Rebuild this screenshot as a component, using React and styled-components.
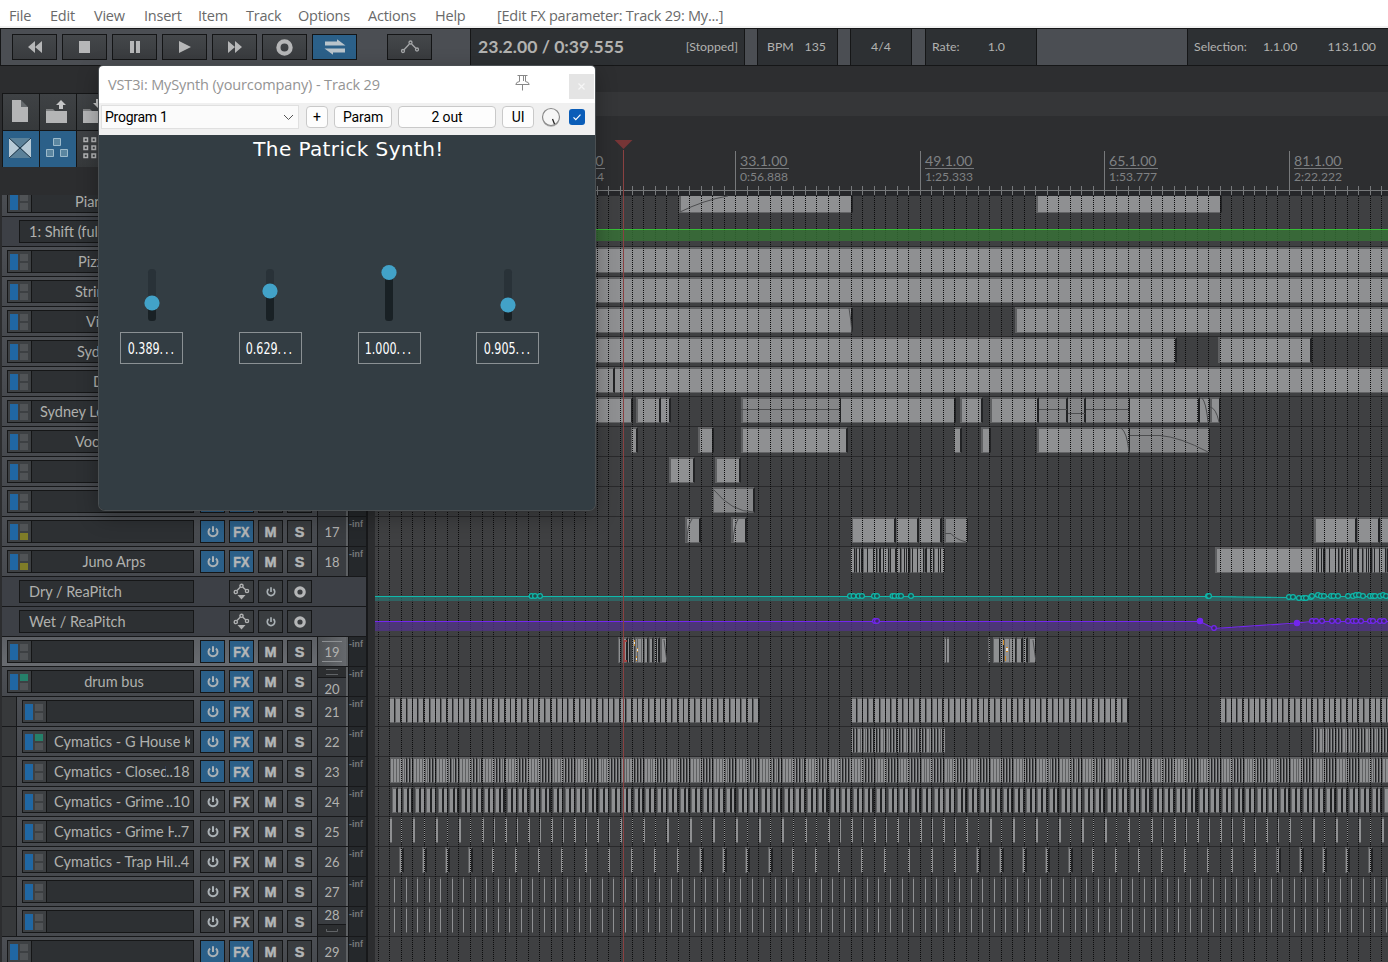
import React from "react";
import styled, { createGlobalStyle } from "styled-components";

const Global = createGlobalStyle`
  * { box-sizing: border-box; }
  html, body { margin: 0; padding: 0; }
  body { width: 1388px; height: 962px; overflow: hidden; background: #2c2d2f; }
`;

const ui = `"Open Sans", "Noto Sans", sans-serif`;
const theme = `Lato, "Liberation Sans", sans-serif`;

const Page = styled.div`
  position: relative;
  width: 1388px;
  height: 962px;
  overflow: hidden;
  display: flex;
  flex-direction: column;
  background: #2c2d2f;
  font-family: ${theme};
  color: #b2b2b0;
`;

/* ---------- menu ---------- */
const MenuBar = styled.div`
  height: 28px;
  flex: none;
  display: flex;
  background: #fff;
  border-bottom: 2px solid #f0f0f0;
  padding-left: 9px;
`;
const MenuItem = styled.div`
  width: ${(p) => p.$w}px;
  height: 26px;
  white-space: nowrap;
  font: 14.5px/31px ${ui};
  letter-spacing: -0.22px;
  color: #6a6a6a;
`;

/* ---------- transport ---------- */
const Transport = styled.div`
  height: 38px;
  flex: none;
  display: flex;
  background: #4b4e53;
  border-top: 1px solid #151617;
  border-bottom: 1px solid #151617;
  border-left: 1px solid #151617;
`;
const TransportButtons = styled.div`
  width: 469px;
  flex: none;
  padding: 5px 0 0 11px;
  display: flex;
  gap: 5px;
`;
const TButton = styled.div`
  width: 45px;
  height: 26px;
  display: flex;
  align-items: center;
  justify-content: center;
  border: 1px solid #141516;
  background: ${(p) => (p.$on ? "#2b6089" : "linear-gradient(#44474a, #393b3e)")};
  margin-left: ${(p) => p.$ml || 0}px;
`;
const Readout = styled.div`
  width: ${(p) => p.$w}px;
  flex: none;
  display: flex;
  justify-content: ${(p) => p.$j || "space-between"};
  padding: ${(p) => p.$p};
  margin-left: ${(p) => p.$ml || 0}px;
  background: #2d3033;
  border-left: 1px solid #151617;
  border-right: 1px solid #151617;
  font-size: 12.3px;
  line-height: 36px;
  white-space: pre;
`;
const BigTime = styled.span`
  font-size: 17.6px;
  font-weight: 700;
  line-height: 36px;
`;
const RangeEnd = styled.span`
  margin-left: 14px;
`;

/* ---------- main ---------- */
const Main = styled.div`
  flex: 1;
  min-height: 0;
  display: flex;
`;
const LeftPane = styled.div`
  width: 375px;
  flex: none;
  display: flex;
  flex-direction: column;
  overflow: hidden;
`;
const ToolGrid = styled.div`
  height: 129px;
  flex: none;
  padding: 27px 0 0 2px;
  display: grid;
  grid-template-columns: repeat(3, 37px);
  grid-auto-rows: 37px;
`;
const Tool = styled.div`
  border: 1px solid #151617;
  border-width: 1px 0 0 1px;
  display: flex;
  align-items: center;
  justify-content: center;
  padding: 0 2px 2px 0;
  background: ${(p) => (p.$on ? "#2b6089" : "linear-gradient(#3f4245, #36393b)")};
`;
const TrackPanel = styled.div`
  flex: 1;
  min-height: 0;
  width: 368px;
  margin-left: 2px;
  overflow: hidden;
  display: flex;
  flex-direction: column;
  justify-content: flex-end;
  margin-bottom: -5px;
`;

const Row = styled.div`
  height: 30px;
  flex: none;
  display: flex;
  width: 366px;
  border-bottom: 1px solid #17181a;
  border-right: 2px solid #17181a;
  background: ${(p) =>
    p.$kind === "env" ? "#3d4046" : p.$kind === "sel" ? "linear-gradient(#5d6065,#686b70)" : "linear-gradient(#4c4f54,#46494e)"};
`;
const Indent = styled.div`
  width: 15px;
  flex: none;
  background: #37393b;
  border-right: 1px solid #17181a;
`;
const Body = styled.div`
  flex: 1;
  display: flex;
  padding: 3px 0 0 ${(p) => (p.$env ? 17 : 5)}px;
`;
const IconBox = styled.div`
  width: 25px;
  height: 23px;
  flex: none;
  display: grid;
  grid-template-columns: 8px 8px;
  grid-template-rows: 6px 6px;
  gap: 3px 2px;
  padding: 3px 0 0 2px;
  border: 1px solid #151617;
  background: #3d4043;
`;
const Chip = styled.i`
  background: ${(p) => p.$c};
  grid-row: ${(p) => (p.$tall ? "1 / 3" : "auto")};
  height: ${(p) => (p.$tall ? 16 : 7)}px;
`;
const Name = styled.div`
  flex: 1;
  min-width: 0;
  height: 23px;
  display: flex;
  overflow: hidden;
  border: 1px solid #151617;
  border-left-width: ${(p) => (p.$env ? 1 : 0)}px;
  background: #2d3033;
  justify-content: ${(p) => (p.$center ? "center" : "flex-start")};
  padding: 0 ${(p) => (p.$center ? 0 : 3)}px 0 ${(p) => p.$pad || 0}px;
  font-size: 14.5px;
  line-height: 22px;
  white-space: nowrap;
  color: #b0b0ae;
`;
const Clipped = styled.span`
  width: ${(p) => p.$w}px;
  overflow: hidden;
  white-space: pre;
`;
const NameGroup = styled.div`
  width: ${(p) => p.$w}px;
  flex: none;
  display: flex;
`;
const Buttons = styled.div`
  display: flex;
  gap: 4px;
  width: 118px;
  flex: none;
  justify-content: flex-end;
`;
const Btn = styled.div`
  width: 25px;
  height: 23px;
  flex: none;
  display: flex;
  align-items: center;
  justify-content: center;
  border: 1px solid #151617;
  background: ${(p) => (p.$on ? "#2b5f88" : "#3a3d40")};
  color: #b4b6b7;
  font: bold 14.5px/20px "Liberation Sans", Arial, sans-serif;
  -webkit-text-stroke: 0.5px #b4b6b7;
`;
const Narrow = styled.span`
  display: block;
  transform: scaleX(0.86);
`;
const NumCell = styled.div`
  width: 29px;
  flex: none;
  position: relative;
  border-left: 1px solid #17181a;
  background: ${(p) => (p.$sel ? "linear-gradient(90deg,#4f5255,#66696d)" : "#3a3d41")};
  font-size: 13px;
  text-align: center;
  line-height: ${(p) => p.$lh || 31}px;
  &::before, &::after {
    content: "";
    display: ${(p) => (p.$sel ? "block" : "none")};
    position: absolute;
    left: 4px;
    width: 20px;
    height: 1px;
    top: 4px;
    background: #8c8f92;
  }
  &::after { top: 24px; }
`;
const FolderTab = styled.div`
  height: ${(p) => p.$h}px;
  display: flex;
  justify-content: center;
  align-items: center;
  background: #2c2e30;
  border: 0 solid #17181a;
  border-width: ${(p) => (p.$low ? "1px 0 0" : "0 0 1px")};
`;
const Meter = styled.div`
  width: 20px;
  flex: none;
  overflow: hidden;
  border-left: 2px solid #5d6063;
  background: #25282b;
  box-shadow: inset 1px 0 0 #17181a;
  padding-left: 1px;
  font: bold 8.8px/15px "Liberation Sans", Arial, sans-serif;
  letter-spacing: 0.1px;
  color: #777a7b;
`;

const PowerIcon = ({ s = 12 }) => (
  <svg width={s} height={s} viewBox="0 0 12 12" fill="none" stroke="#abb2b6" strokeWidth="2">
    <path d="M3.1 2.4a4.5 4.5 0 1 0 5.8 0M6 .2v5.800" />
  </svg>
);
const RecIcon = ({ s = 12, w = 3.2 }) => (
  <svg width={s} height={s} viewBox="0 0 12 12">
    <circle cx="6" cy="6" r={5.8 - w / 2} fill="none" stroke="#b6b7b8" strokeWidth={w} />
  </svg>
);
const EnvIcon = () => (
  <svg width="17" height="17" viewBox="0 0 17 17" fill="none" stroke="#b0b1b2" strokeWidth="1.4">
    <circle cx="2.800" cy="9" r="1.600" />
    <circle cx="8.500" cy="2.800" r="1.600" />
    <circle cx="14" cy="8" r="1.600" />
    <path d="M4 7.500 7.400 4M9.600 4l3.300 3" />
    <path d="M4.500 12h8L8.500 16.500z" fill="#b0b1b2" stroke="none" />
  </svg>
);

const tracks = [
  { name: "Pian", pad: 43 },
  { env: true, name: "1: Shift (full" },
  { name: "Pizz", pad: 46 },
  { name: "Strin", pad: 43 },
  { name: "Vi", pad: 54 },
  { name: "Syd", pad: 45 },
  { name: "D", pad: 61 },
  { name: "Sydney Le", pad: 8 },
  { name: "Voca", pad: 43 },
  { name: "", n: 15, on: true },
  { name: "", n: 16, on: true },
  { name: "", n: 17, on: true, b: "#7f7c28" },
  { name: "Juno Arps", center: true, pad: 3, n: 18, on: true, b: "#7f7c28" },
  { env: true, name: "Dry / ReaPitch" },
  { env: true, name: "Wet / ReaPitch" },
  { name: "", n: 19, on: true, sel: true },
  { name: "drum bus", center: true, pad: 3, n: 20, on: true, a: "#25806a", tab: "top" },
  { ind: true, name: "", n: 21, on: true },
  { ind: true, name: "Cymatics - G House K", cut: 136, n: 22, on: true, a: "#25806a" },
  { ind: true, name: "Cymatics - Closed", cut: 112, tail: "..18", n: 23, on: true },
  { ind: true, name: "Cymatics - Grime ", cut: 112, tail: "..10", n: 24 },
  { ind: true, name: "Cymatics - Grime H", cut: 120, tail: "..7", n: 25 },
  { ind: true, name: "Cymatics - Trap Hill", cut: 120, tail: "..4", n: 26 },
  { ind: true, name: "", n: 27 },
  { ind: true, name: "", n: 28, tab: "bottom" },
  { name: "", n: 29, on: true },
];

function EnvRow({ t }) {
  return (
    <Row $kind="env">
      <Body $env>
        <NameGroup $w={175}>
          <Name $env $pad={9}>{t.name}</Name>
        </NameGroup>
        <Buttons>
          <Btn><EnvIcon /></Btn>
          <Btn><PowerIcon s={10} /></Btn>
          <Btn><RecIcon /></Btn>
        </Buttons>
      </Body>
    </Row>
  );
}

function TrackRow({ t }) {
  if (t.env) return <EnvRow t={t} />;
  return (
    <Row $kind={t.sel ? "sel" : "track"}>
      {t.ind && <Indent />}
      <Body>
        <NameGroup $w={t.ind ? 172 : 187}>
          <IconBox>
            <Chip $tall $c="#2067a3" />
            <Chip $c={t.a || "#505356"} />
            <Chip $c={t.b || "#505356"} />
          </IconBox>
          <Name $center={t.center} $pad={t.cut ? 7 : t.pad}>
            {t.cut ? (
              <>
                <Clipped $w={t.cut}>{t.name}</Clipped>
                {t.tail}
              </>
            ) : (
              t.name
            )}
          </Name>
        </NameGroup>
        <Buttons>
          <Btn $on={t.on}><PowerIcon /></Btn>
          <Btn $on={t.on}><Narrow>FX</Narrow></Btn>
          <Btn>M</Btn>
          <Btn>S</Btn>
        </Buttons>
      </Body>
      <NumCell $sel={t.sel} $lh={t.tab === "top" ? 22 : t.tab === "bottom" ? 17 : 31}>
        {t.tab === "top" && (
          <FolderTab $h={11}>
            <svg width="12" height="7"><path d="M0 .5h12M0 5.500h12" stroke="#606366" /></svg>
          </FolderTab>
        )}
        {t.n}
        {t.tab === "bottom" && (
          <FolderTab $h={12} $low>
            <svg width="12" height="4"><path d="M.5 0v2.500h11V0" fill="none" stroke="#606366" /></svg>
          </FolderTab>
        )}
      </NumCell>
      <Meter>-inf</Meter>
    </Row>
  );
}

/* ---------- arrange view ---------- */
const X0 = 375;
const bar = (n) => Math.round(366.2 + 11.535 * n);

const Arrange = styled.div`
  flex: 1;
  position: relative;
  overflow: hidden;
  display: flex;
  flex-direction: column;
`;
const RulerTop = styled.div`
  height: 26px;
  flex: none;
  background: #2d2e30;
`;
const RulerBand = styled.div`
  height: 24px;
  flex: none;
  background: #353638;
`;
const Ruler = styled.div`
  height: 80px;
  flex: none;
  position: relative;
  background: #2d2e30;
`;
const Mark = styled.div`
  position: absolute;
  top: 36px;
  padding-left: 4px;
  color: #7f8183;
`;
const MarkBar = styled.div`
  font-size: 14.1px;
  line-height: 17px;
  height: 17px;
  border-bottom: 1px solid #77797b;
  width: 49px;
  white-space: nowrap;
`;
const MarkTime = styled.div`
  font-size: 12.1px;
  line-height: 16px;
`;
const Lanes = styled.div`
  flex: 1;
  min-height: 0;
  overflow: hidden;
  display: flex;
  flex-direction: column;
  justify-content: flex-end;
  margin-bottom: -5px;
`;
const Lane = styled.div`
  height: 30px;
  flex: none;
  position: relative;
  background: #3f4042;
  border-bottom: 1px solid ${(p) => (p.$line ? "#29292b" : "#3f4042")};
`;
const Clip = styled.div`
  position: absolute;
  top: 0;
  height: 26px;
  border-style: solid;
  border-color: #5f6062 #222325 #636466 #5f6062;
  border-width: 2px ${(p) => p.$r}px 1px ${(p) => p.$l}px;
  background: ${(p) => (p.$dim ? "#858688" : "#8f9092")};
`;
const Overlay = styled.svg`
  position: absolute;
  left: 0;
  top: 0;
  pointer-events: none;
`;

const c = (a, b, l = 2, r = 2, dim = false) => ({ a, b, l, r, dim });

const seq = (from, to, step, make) => {
  const out = [];
  for (let k = 0; from + step * k < to - 1; k++) {
    const a = Math.round(from + step * k);
    const b = Math.min(to, Math.round(from + step * (k + 1)));
    out.push(...make(a, b, k));
  }
  return out;
};
const halves = (from, to) => seq(from, to, 5.7675, (a, b) => [c(a, b, b - a > 5 ? 1 : 0, 1)]);
const fine = (from, to) =>
  seq(from, to, 2.884, (a, b, k) => [k % 8 < 4 ? c(a, b, 1, 0) : c(a, b, 1, b - a > 2 ? 1 : 0)]);
const uneven = (from, to) => {
  const w = [4, 2, 3, 3, 5, 6, 3, 4, 3, 5, 2, 6, 4];
  const out = [];
  let x = from;
  for (let i = 0; x < to; i++) {
    const n = Math.min(to, x + w[i % w.length]);
    out.push(c(x, n, i % 3 === 1 ? 1 : 0, n - x > 2 ? (i % 4 === 3 ? 2 : 1) : 1));
    x = n;
  }
  return out;
};
const fineDark = (from, to) => seq(from, to, 2.884, (a, b, k) => [c(a, b, 1, k % 8 === 2 ? 0 : b - a > 2 ? 1 : 0)]);

const laneClips = [
  [c(679, 853), c(1036, 1222)],
  [],
  [c(370, 1392)],
  [c(370, 1392)],
  [c(370, 853), c(1015, 1392)],
  [c(370, 1177), c(1218, 1312)],
  [c(370, 615), c(615, 1392, 0)],
  [
    c(370, 633), c(636, 661), c(661, 671, 0), c(741, 841, 2, 1, true), c(841, 956, 0), c(960, 983), c(990, 1039),
    c(1039, 1068, 0, 2, true), c(1068, 1086, 0, 2, true), c(1086, 1130, 0, 1, true), c(1130, 1200, 0), c(1200, 1210, 0, 1), c(1210, 1220, 2, 1),
  ],
  [c(631, 638, 1), c(698, 714), c(741, 848), c(954, 962, 1), c(981, 991), c(1037, 1130, 2, 1), c(1130, 1210, 0, 1, true)],
  [c(669, 695), c(715, 741)],
  [c(712, 755, 2, 2, true)],
  [
    c(685, 701), c(731, 747), c(851, 896), c(896, 919, 1), c(919, 942, 1), c(944, 968, 2, 1, true),
    c(1314, 1357), c(1357, 1380, 1), c(1380, 1392, 1),
  ],
  [...uneven(851, 945), c(1215, 1313, 2, 0), ...uneven(1313, 1390)],
  [],
  [],
  [
    c(618, 620, 1, 0), c(622, 628, 2, 2), c(628, 630, 0, 1), c(632, 634, 1, 0), c(635, 637, 1, 0), c(637, 641, 1, 0), c(641, 644, 1, 1),
    c(644, 648, 1, 1), c(649, 653, 1, 1), c(654, 657, 1, 1), c(657, 660, 0, 2), c(660, 667, 2, 1), c(944, 946, 1, 0), c(947, 949, 0, 0), c(988, 990, 1, 0),
    c(993, 1000, 1, 1), c(1000, 1004, 1, 1), c(1004, 1009, 1, 0), c(1009, 1012, 1, 0), c(1012, 1016, 1, 1), c(1017, 1023, 0, 2), c(1023, 1028, 1, 2), c(1028, 1036, 2, 1),
  ],
  [],
  [...halves(389.5, 760), ...halves(851, 1129), ...halves(1220, 1390)],
  [...fineDark(851, 945), ...fineDark(1313, 1390)],
  fine(390, 1390),
  seq(391.5, 1390, 11.535, (a, b, k) => [c(a, a + 6, 1, 2), c(a + 6, a + 9, 0, k % 4 === 1 ? 1 : 0), c(a + 9, a + 10, 0, 1)]),
  seq(389.7, 1390, 11.535, (a, b, k) => [c(a, a + (k % 2 ? 1 : 2), 0, 0)]),
  seq(400, 1390, 23.07, (a, b, k) => {
    const tail = k < 4 || (k > 12 && k < 17) || (k > 24 && k < 30) || k > 37;
    return [tail ? c(a - 1, a + 4, 1, 2) : c(a, a + 2, 0, 0)];
  }),
  seq(394, 1390, 11.535, (a) => [c(a, a + 1, 0, 0)]),
  seq(394, 1390, 11.535, (a) => [c(a, a + 1, 0, 0)]),
  [],
];
const noLine = new Set([0, 12, 13]);

const dry = [
  [531.5], [535], [540], [850], [853.5], [858.5], [862], [874], [877], [892.5], [894.5], [898.5], [901], [911], [1208], [1209],
  [1289, 597], [1293, 597], [1299, 598], [1303.5, 598], [1306, 598], [1311, 597], [1312], [1318, 595], [1321], [1324], [1331], [1333.5], [1338],
  [1348], [1353], [1356, 595], [1359, 595], [1363], [1370], [1373], [1375], [1380], [1383, 595], [1386],
];
const wet = [875, 877, 1312, 1316, 1322, 1332, 1338, 1348, 1353, 1356, 1361, 1370, 1373, 1380, 1384];

function TimelineOverlay() {
  const bars = Array.from({ length: 89 }, (_, i) => bar(i + 1));
  return (
    <Overlay width="1013" height="896" viewBox="375 66 1013 896">
      <g shapeRendering="crispEdges">
        {bars.map((x) => (
          <line key={x} x1={x + 0.5} x2={x + 0.5} y1="196" y2="962" stroke="#0c0c0d" strokeDasharray="1 1" />
        ))}
        <rect x="375" y="230" width="1013" height="11" fill="#367336" fillOpacity=".78" />
        <rect x="375" y="229" width="1013" height="1" fill="#37bd37" />
        <path d="M375 596H1209L1289 597.500 1306 598 1312 596H1388V601H375z" fill="#2b7472" fillOpacity=".7" />
        <path d="M375 622H1200L1214 629 1297 624 1312 622H1388V631H375z" fill="#51338a" fillOpacity=".75" />
        <rect x="375" y="190" width="1013" height="1" fill="#77797b" />
        <rect x="375" y="191" width="1013" height="5" fill="#26272a" />
        {bars.map((x) => (
          <rect key={x} x={x} y="186" width="1" height="9" fill="#77797b" />
        ))}
        {[551, 735, 920, 1104, 1289].map((x) => (
          <rect key={x} x={x} y="151" width="1" height="44" fill="#77797b" />
        ))}
      </g>
      <g fill="none" stroke="#4d4e50" strokeWidth="1">
        <path d="M680 212Q704 200 728 196M849 308Q851 320 852 333M741 409.500H840M1039 409.500H1067M1068 413.500H1085M1086 409.500H1129" />
        <path d="M1202 398Q1206 402 1208 422M1210 407Q1216 408 1219 422M1121 428Q1127 432 1129 452M1130 435.500H1160Q1180 437 1208 452" />
        <path d="M714 490Q732 512 754 512M687 542Q687 526 692 519M733 542Q734 526 738 519M945 533.500H951Q955 539 966 542M664 640L667 662M1033 640L1036 662" />
      </g>
      <g fill="none" stroke="#0fb9ab" strokeWidth="1.200">
        <path d="M375 596.500H1209L1289 597.500 1306 598.500 1312 596.500H1388" />
        {dry.map(([x, y = 596], i) => (
          <circle key={i} cx={x} cy={y} r="2.400" fill="#23494a" />
        ))}
      </g>
      <g fill="none" stroke="#7326f0" strokeWidth="1.200">
        <path d="M375 621.500H1200L1214 628.500 1297 623 1312 621.500H1388" />
        {wet.map((x) => (
          <circle key={x} cx={x} cy="621" r="2.400" fill="#3d2c62" />
        ))}
        <circle cx="1200" cy="621" r="2.600" fill="#7326f0" />
        <circle cx="1297" cy="623" r="2.600" fill="#7326f0" />
        <circle cx="1214" cy="628" r="2.300" fill="#3d2c62" />
      </g>
      <g shapeRendering="crispEdges">
        <path d="M634 640h1v6h-1zM637 648h1v4h-1zM636 656h1v5h-1zM1003 640h1v5h-1zM1006 647h2v5h-2zM1005 656h1v5h-1z" fill="#d08a25" />
        <path d="M634 642h1v2h-1zM637 649h1v2h-1zM1006 648h2v3h-2zM636 658h1v2h-1z" fill="#e8e2d8" />
        <path d="M623 640h4v2h-2v18h2v2h-4z" fill="#a04343" />
        <rect x="623" y="150" width="1" height="812" fill="#8a4141" />
        <path d="M614.500 140h18l-9 9z" fill="#763536" shapeRendering="auto" />
      </g>
    </Overlay>
  );
}

const marks = [
  [551, "17.1.00", "0:28.444"],
  [735, "33.1.00", "0:56.888"],
  [920, "49.1.00", "1:25.333"],
  [1104, "65.1.00", "1:53.777"],
  [1289, "81.1.00", "2:22.222"],
];

/* ---------- plug-in window ---------- */
const Plugin = styled.div`
  position: absolute;
  left: 99px;
  top: 66px;
  width: 496px;
  height: 444px;
  display: flex;
  flex-direction: column;
  overflow: hidden;
  border-radius: 4px 4px 6px 6px;
  background: #333d43;
`;
const PluginShadow = styled(Plugin)`
  background: none;
  overflow: visible;
  box-shadow: 0 0 0 1px #4a4f52, 0 6px 22px rgba(0, 0, 0, 0.32);
`;
const Title = styled.div`
  height: 37px;
  flex: none;
  display: flex;
  align-items: center;
  padding-left: 9px;
  background: #fff;
  color: #949494;
  font: 14.5px/37px ${ui};
`;
const TitleText = styled.span`
  width: 407px;
  letter-spacing: -0.13px;
  white-space: nowrap;
`;
const Pin = styled.svg`
  margin-top: -4px;
`;
const CloseBox = styled.div`
  width: 25px;
  height: 25px;
  margin: 4px 0 0 39px;
  display: flex;
  align-items: center;
  justify-content: center;
  background: #e4e4e4;
`;
const PluginBar = styled.div`
  height: 32px;
  flex: none;
  display: flex;
  padding: 3px 0 0 2px;
  background: #f0f0f0;
  color: #000;
  font: 14px/22px Roboto, "Liberation Sans", sans-serif;
`;
const Combo = styled.div`
  width: 198px;
  height: 24px;
  margin-top: -1px;
  display: flex;
  align-items: center;
  justify-content: space-between;
  padding: 0 4px 0 3px;
  letter-spacing: -0.25px;
  background: #fbfbfb;
  border: 1px solid #e0e0e0;
  margin-right: 7px;
`;
const PButton = styled.div`
  width: ${(p) => p.$w}px;
  height: 22px;
  margin-right: 6px;
  line-height: 21px;
  text-align: center;
  letter-spacing: -0.1px;
  background: #fdfdfd;
  border: 1px solid #c9c9c9;
  border-radius: 4px;
`;
const Check = styled.div`
  width: 16px;
  height: 16px;
  margin: 3px 0 0 7px;
  border-radius: 3px;
  background: #0a5db8;
  display: flex;
`;
const SynthTitle = styled.div`
  padding-left: 3px;
  height: 132px;
  text-align: center;
  color: #fff;
  letter-spacing: 0.4px;
  font: 20px/28px "DejaVu Sans", sans-serif;
`;
const Knobs = styled.div`
  display: flex;
  gap: 55.8px;
  padding-left: 21px;
`;
const Knob = styled.div`
  width: 63px;
  display: flex;
  flex-direction: column;
  align-items: center;
`;
const Slider = styled.svg`
  overflow: visible;
`;
const Value = styled.div`
  width: 63px;
  height: 32px;
  margin-top: 9px;
  border: 1px solid #8b9194;
  color: #fff;
  display: flex;
  justify-content: center;
  padding-top: 1px;
  font: 15.3px/31px "DejaVu Sans Condensed", "DejaVu Sans", sans-serif;
  white-space: nowrap;
`;
const ValueText = styled.span`
  transform: scaleX(0.81);
`;
const Dots = styled.span`
  letter-spacing: 2.4px;
`;

const knobs = [
  ["0.389", 36],
  ["0.629", 24],
  ["1.000", 5.5],
  ["0.905", 38],
];

function PluginWindow() {
  return (
    <Plugin>
      <Title>
        <TitleText>VST3i: MySynth (yourcompany) - Track 29</TitleText>
        <Pin width="15" height="17" viewBox="0 0 15 17" fill="none" stroke="#888">
          <path d="M2.500 1.500h10M4.500 1.500v6M10.500 1.500v6M8.500 2v5M4.500 7.500Q1 8 .8 10.500H14.200Q14 8 10.500 7.500M7.500 10.500v6" />
        </Pin>
        <CloseBox>
          <svg width="7" height="7"><path d="M.5.5l6 6M6.500.5l-6 6" stroke="#f6f6f6" strokeWidth="1.200" /></svg>
        </CloseBox>
      </Title>
      <PluginBar>
        <Combo>
          Program 1
          <svg width="11" height="7" fill="none" stroke="#555"><path d="M1 1l4.500 4.500L10 1" /></svg>
        </Combo>
        <PButton $w={22}>+</PButton>
        <PButton $w={58}>Param</PButton>
        <PButton $w={98}>2 out</PButton>
        <PButton $w={32}>UI</PButton>
        <svg width="22" height="22" viewBox="0 0 22 22">
          <circle cx="11" cy="12.500" r="8.500" fill="#bbb" />
          <circle cx="11" cy="11" r="8.500" fill="#f6f6f6" stroke="#8b8b8b" strokeWidth="1.200" />
          <path d="M12.500 13l2 5" stroke="#222" strokeWidth="1.300" />
        </svg>
        <Check>
          <svg width="16" height="16" fill="none" stroke="#fff" strokeWidth="1.200"><path d="M4.500 8.300l2.300 2.400 4.700-5" /></svg>
        </Check>
      </PluginBar>
      <SynthTitle>The Patrick Synth!</SynthTitle>
      <Knobs>
        {knobs.map(([v, y]) => (
          <Knob key={v}>
            <Slider width="20" height="56" viewBox="0 0 20 56">
              <rect x="6" y="2" width="8" height="52" rx="3.500" fill="#293238" />
              <rect x="6" y={y} width="8" height={54 - y} rx="3.500" fill="#192125" />
              <circle cx="10" cy={y} r="7.600" fill="#42a2c8" />
            </Slider>
            <Value><ValueText>{v}<Dots>...</Dots></ValueText></Value>
          </Knob>
        ))}
      </Knobs>
    </Plugin>
  );
}

const g = "#b6b7b8";
const transportIcons = [
  <svg width="16" height="14" fill={g}><path d="M8 1v12L1 7zM15 1v12L8 7z" /></svg>,
  <svg width="12" height="12" fill={g}><path d="M0 0h11v12H0z" /></svg>,
  <svg width="12" height="12" fill={g}><path d="M1 0h4v12H1zM7 0h4v12H7z" /></svg>,
  <svg width="12" height="12" fill={g}><path d="M0 0l12 6L0 12z" /></svg>,
  <svg width="16" height="14" fill={g}><path d="M1 1v12l7-6zM8 1v12l7-6z" /></svg>,
  <RecIcon s={17} w={3} />,
  <svg width="22" height="16" viewBox="0 0 22 16" fill="#b9c4cb">
    <path d="M1 2.500h12V.2L21.500 6.500H1zM21 13.500H9v2.300L.5 9.500H21z" />
  </svg>,
];

const menu = [
  ["File", 41], ["Edit", 44], ["View", 50], ["Insert", 54], ["Item", 48],
  ["Track", 52], ["Options", 70], ["Actions", 67], ["Help", 62], ["[Edit FX parameter: Track 29: My...]", 240],
];

export default function App() {
  return (
    <Page>
      <Global />
      <MenuBar>
        {menu.map(([m, w]) => (
          <MenuItem key={m} $w={w}>{m}</MenuItem>
        ))}
      </MenuBar>
      <Transport>
        <TransportButtons>
          {transportIcons.map((icon, i) => (
            <TButton key={i} $on={i === 6}>{icon}</TButton>
          ))}
          <TButton $ml={25}>
            <svg width="20" height="14" viewBox="0 0 20 14" fill="none" stroke="#a5a7a9" strokeWidth="1.300">
              <circle cx="3" cy="11" r="1.500" /><circle cx="10.500" cy="2.500" r="1.500" /><circle cx="17" cy="9.500" r="1.500" />
              <path d="M4 9.700L9.400 4M11.600 4l4.200 4.300" />
            </svg>
          </TButton>
        </TransportButtons>
        <Readout $w={275} $p="0 6px 0 7px"><BigTime>23.2.00 / 0:39.555</BigTime><span>[Stopped]</span></Readout>
        <Readout $w={81} $ml={12} $p="0 11px 0 9px"><span>BPM</span><span>135</span></Readout>
        <Readout $w={62} $ml={12} $j="center" $p="0"><span>4/4</span></Readout>
        <Readout $w={112} $ml={13} $p="0 31px 0 6px"><span>Rate:</span><span>1.0</span></Readout>
        <Readout $w={202} $ml={150} $p="0 12px 0 6px"><span>Selection:</span><span>1.1.00</span><RangeEnd>113.1.00</RangeEnd></Readout>
      </Transport>
      <Main>
        <LeftPane>
          <ToolGrid>
            <Tool>
              <svg width="18" height="24" viewBox="0 0 18 24"><path d="M1 1h9v7h7v15H1z" fill="#b4b5b6" /><path d="M10 1l7 7h-7z" fill="#65696c" /></svg>
            </Tool>
            <Tool>
              <svg width="24" height="25" viewBox="0 0 24 25"><path d="M1 12h21v12H1z" fill="#b4b5b6" /><path d="M1 10h7l2 2H1z" fill="#7d7f81" /><path d="M16 1l5 5h-3v4h-4V6h-3z" fill="#c5c6c7" /></svg>
            </Tool>
            <Tool>
              <svg width="24" height="25" viewBox="0 0 24 25"><path d="M1 12h21v12H1z" fill="#b4b5b6" /><path d="M1 10h7l2 2H1z" fill="#7d7f81" /><path d="M16 9l5-5h-3V0h-4v4h-3z" fill="#c5c6c7" /></svg>
            </Tool>
            <Tool $on>
              <svg width="24" height="22" viewBox="0 0 24 22"><path d="M1 1h22v20H1z" fill="#5b8199" /><path d="M1 1v20l10-10zM23 1v20L13 11z" fill="#b7cad6" /><path d="M1 1l22 20M23 1L1 21" stroke="#22394a" /></svg>
            </Tool>
            <Tool $on>
              <svg width="24" height="22" viewBox="0 0 24 22" fill="#5b86a0" stroke="#9cbacb"><path d="M8.500 1.500h7v7h-7zM1.500 12.500h7v7h-7zM15.500 12.500h7v7h-7z" /></svg>
            </Tool>
            <Tool>
              <svg width="22" height="22" viewBox="0 0 22 22" fill="none" stroke="#b4b5b6" strokeWidth="1.500"><path d="M1 1h3.500v3.500H1zM1 9h3.500v3.500H1zM1 17h3.500v3.500H1zM9 1h3.500v3.500H9zM9 9h3.500v3.500H9zM9 17h3.500v3.500H9zM17 1h3.500v3.500H17zM17 9h3.500v3.500H17z" /></svg>
            </Tool>
          </ToolGrid>
          <TrackPanel>
            {tracks.map((t, i) => <TrackRow key={i} t={t} />)}
          </TrackPanel>
        </LeftPane>
        <Arrange>
          <RulerTop />
          <RulerBand />
          <Ruler>
            {marks.map(([x, a, b]) => (
              <Mark key={x} style={{ left: x - X0 + 1 }}>
                <MarkBar>{a}</MarkBar>
                <MarkTime>{b}</MarkTime>
              </Mark>
            ))}
          </Ruler>
          <Lanes>
            {laneClips.map((clips, i) => (
              <Lane key={i} $line={!noLine.has(i)}>
                {clips.map((k, j) => (
                  <Clip key={j} $l={k.l} $r={k.r} $dim={k.dim} style={{ left: k.a - X0, width: k.b - k.a }} />
                ))}
              </Lane>
            ))}
          </Lanes>
          <TimelineOverlay />
        </Arrange>
      </Main>
      <PluginShadow />
      <PluginWindow />
    </Page>
  );
}
